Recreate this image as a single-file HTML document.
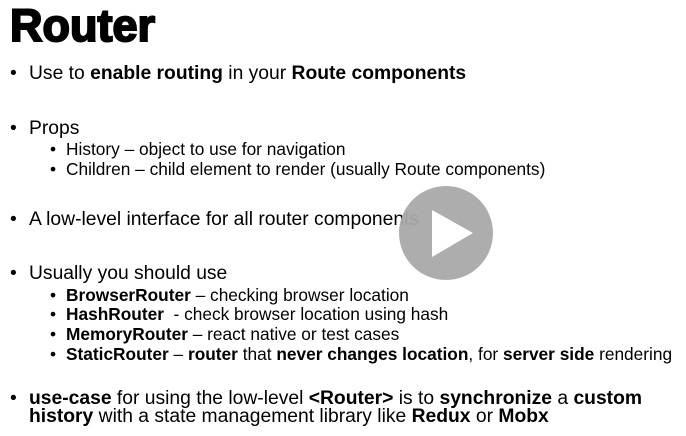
<!DOCTYPE html>
<html><head><style>
body{margin:0;width:686px;height:436px;background:#fff;position:relative;overflow:hidden;font-family:"Liberation Sans",Arial,sans-serif;color:#000}
.t{position:absolute;left:10px;top:0px;font-size:45px;font-weight:bold;-webkit-text-stroke:2px #000;letter-spacing:0px}
.l{position:absolute;font-size:19.3px;white-space:nowrap;line-height:20px}
.s{font-size:17.3px}
.bu{display:inline-block;width:19px}
.bs{display:inline-block;width:16px}
</style></head><body>
<div class="t">Router</div>
<div class="l" style="left:10px;top:64px"><span class="bu">•</span>Use to <b>enable routing</b> in your <b>Route components</b></div>
<div class="l" style="left:10px;top:119px"><span class="bu">•</span>Props</div>
<div class="l s" style="left:50px;top:139px"><span class="bs">•</span>History – object to use for navigation</div>
<div class="l s" style="left:50px;top:159px"><span class="bs">•</span>Children – child element to render (usually Route components)</div>
<div class="l" style="left:10px;top:210px"><span class="bu">•</span>A low-level interface for all router components</div>
<div class="l" style="left:10px;top:264px"><span class="bu">•</span>Usually you should use</div>
<div class="l s" style="left:50px;top:285px"><span class="bs">•</span><b>BrowserRouter</b> – checking browser location</div>
<div class="l s" style="left:50px;top:304px"><span class="bs">•</span><b>HashRouter</b>&nbsp; - check browser location using hash</div>
<div class="l s" style="left:50px;top:324px"><span class="bs">•</span><b>MemoryRouter</b> – react native or test cases</div>
<div class="l s" style="left:50px;top:344px"><span class="bs">•</span><b>StaticRouter</b> – <b>router</b> that <b>never changes location</b>, for <b>server side</b> rendering</div>
<div class="l" style="left:10px;top:390px;line-height:18px"><span class="bu">•</span><b>use-case</b> for using the low-level <b>&lt;Router&gt;</b> is to <b>synchronize</b> a <b>custom</b><br><span class="bu"></span><b>history</b> with a state management library like <b>Redux</b> or <b>Mobx</b></div>
<svg style="position:absolute;left:398px;top:185px" width="96" height="96" viewBox="0 0 96 96">
<circle cx="48" cy="48" r="47" fill="#a9a9a9" fill-opacity="0.95"/>
<path d="M34 25 L75 48 L34 72 Z" fill="#fff"/>
</svg>
</body></html>
